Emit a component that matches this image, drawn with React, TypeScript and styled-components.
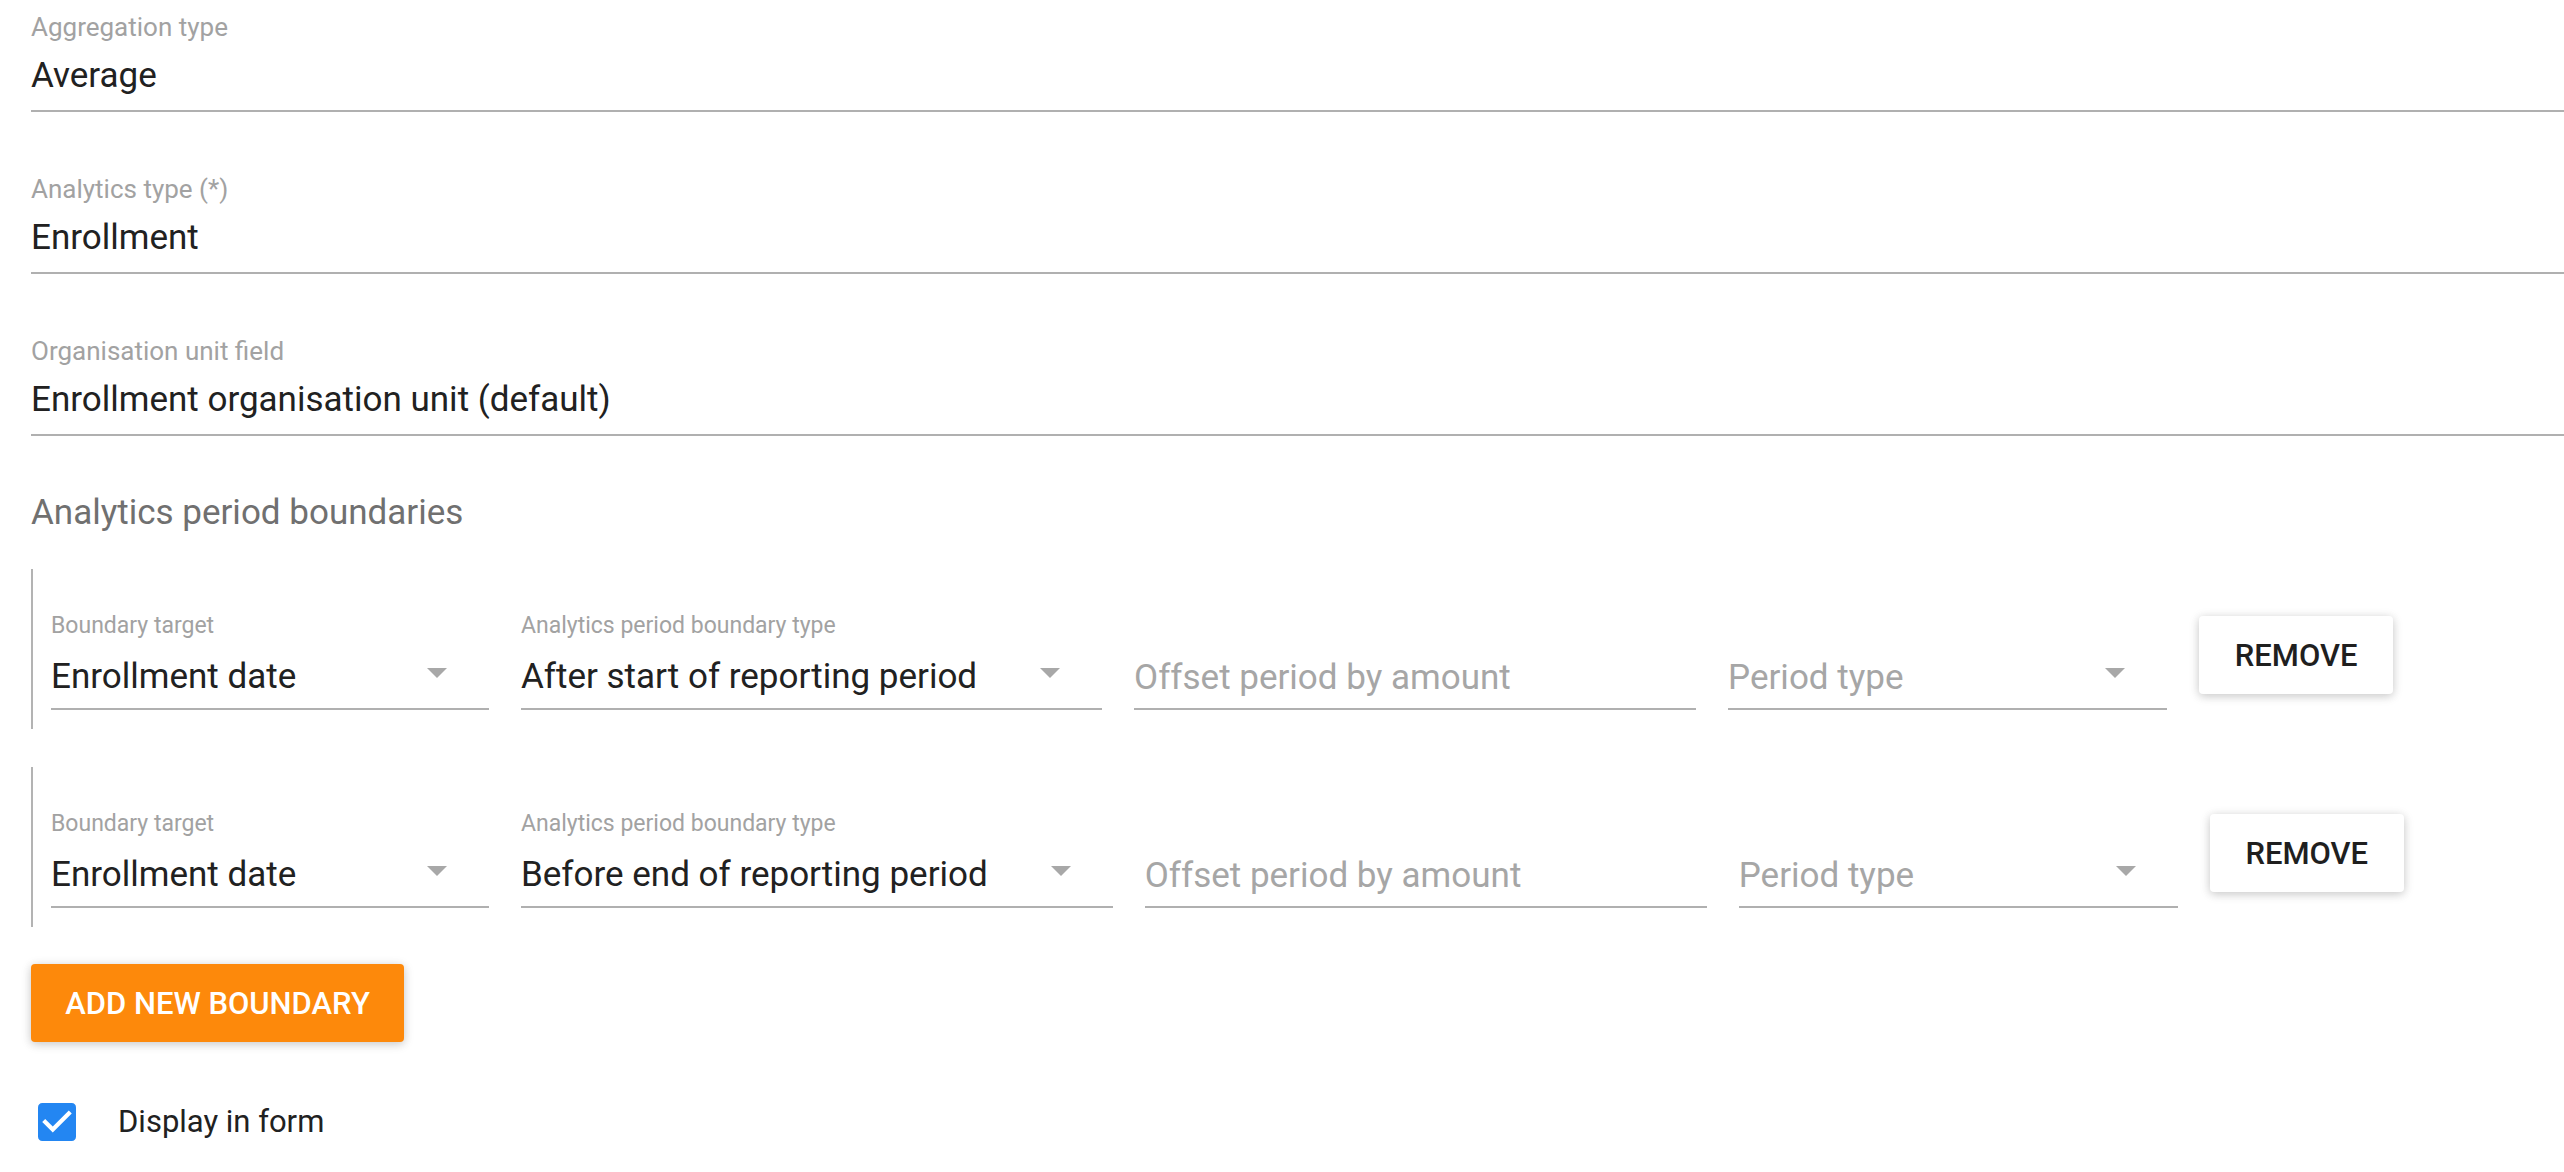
import React from "react";
import styled, { createGlobalStyle } from "styled-components";

const GlobalStyle = createGlobalStyle`
  html, body { margin: 0; padding: 0; background: #ffffff; }
  body {
    font-family: Roboto, "Noto Sans", "Liberation Sans", sans-serif;
    -webkit-font-smoothing: antialiased;
  }
  * { box-sizing: border-box; }
`;

const Page = styled.main`
  display: flex;
  flex-direction: column;
  align-items: flex-start;
  padding: 15px 0 30px 31px;
`;

const InfoField = styled.div`
  align-self: stretch;
  display: flex;
  flex-direction: column;
  padding-bottom: 18px;
  border-bottom: 2px solid #b0b0b0;
  & + & {
    margin-top: 65px;
  }
`;

const FloatingLabel = styled.div<{ $small?: boolean }>`
  height: 24px;
  font-size: ${(p) => (p.$small ? 23 : 26)}px;
  line-height: 24px;
  color: #a2a2a2;
  white-space: nowrap;
`;

const InfoValue = styled.div`
  margin-top: 21px;
  font-size: 35px;
  line-height: 32px;
  color: #212121;
  white-space: nowrap;
`;

const SectionTitle = styled.h2`
  margin: 59px 0 0;
  font-size: 35px;
  line-height: 36px;
  font-weight: 400;
  color: #707070;
`;

const BoundaryList = styled.div`
  align-self: stretch;
  display: flex;
  flex-direction: column;
  gap: 38px;
  margin-top: 38px;
`;

const BoundaryRow = styled.div`
  display: flex;
  align-items: flex-start;
  gap: 32px;
  border-left: 2px solid #b3b3b3;
  padding: 45px 0 19px 18px;
`;

const Field = styled.div<{ $width?: number; $minWidth?: number }>`
  display: flex;
  flex-direction: column;
  flex: none;
  ${(p) => (p.$width ? `width: ${p.$width}px;` : "")}
  ${(p) => (p.$minWidth ? `min-width: ${p.$minWidth}px;` : "")}
`;

const FieldControl = styled.div`
  display: flex;
  align-items: flex-start;
  height: 57px;
  margin-top: 15px;
  border-bottom: 2px solid #b0b0b0;
`;

const SpacerLabel = styled.div`
  height: 24px;
`;

const SelectText = styled.span<{ $placeholder?: boolean }>`
  flex: 1 1 auto;
  font-size: 35px;
  line-height: 30px;
  white-space: nowrap;
  padding-top: ${(p) => (p.$placeholder ? 10 : 9)}px;
  color: ${(p) => (p.$placeholder ? "#a6a6a6" : "#212121")};
`;

const ArrowIcon = styled.svg`
  flex: none;
  width: 20px;
  height: 10px;
  margin: 15px 42px 0 63px;
  fill: #a8a8a8;
`;

const TextInput = styled.input`
  width: 100%;
  height: 50px;
  border: none;
  outline: none;
  padding: 0;
  margin: 0;
  background: transparent;
  font-family: inherit;
  font-size: 35px;
  line-height: 50px;
  color: #212121;
  &::placeholder {
    color: #a6a6a6;
    opacity: 1;
  }
`;

const RaisedButton = styled.button<{ $primary?: boolean; $width: number }>`
  flex: none;
  width: ${(p) => p.$width}px;
  height: 78px;
  padding: 0;
  border: none;
  border-radius: 4px;
  background: ${(p) => (p.$primary ? "#fd890b" : "#ffffff")};
  color: ${(p) => (p.$primary ? "#ffffff" : "#1f1f1f")};
  font-family: inherit;
  font-size: 31px;
  font-weight: 500;
  text-transform: uppercase;
  letter-spacing: 0;
  box-shadow: 0 2px 12px rgba(0, 0, 0, 0.12), 0 2px 8px rgba(0, 0, 0, 0.12);
  cursor: pointer;
`;

const RemoveButton = styled(RaisedButton)`
  margin-top: 2px;
`;

const AddButton = styled(RaisedButton)`
  margin-top: 37px;
`;

const CheckRow = styled.label`
  display: flex;
  align-items: center;
  gap: 42px;
  margin: 61px 0 0 7px;
  font-size: 31px;
  line-height: 32px;
  color: #212121;
  cursor: pointer;
`;

const CheckIcon = styled.svg`
  width: 38px;
  height: 38px;
  flex: none;
`;

function Arrow() {
  return (
    <ArrowIcon viewBox="0 0 20 10">
      <polygon points="0,0 20,0 10,10" />
    </ArrowIcon>
  );
}

function SelectField({
  label,
  value,
  placeholder,
  minWidth,
}: {
  label?: string;
  value?: string;
  placeholder?: string;
  minWidth: number;
}) {
  return (
    <Field $minWidth={minWidth}>
      {label ? <FloatingLabel $small>{label}</FloatingLabel> : <SpacerLabel />}
      <FieldControl>
        <SelectText $placeholder={!value}>{value ?? placeholder}</SelectText>
        <Arrow />
      </FieldControl>
    </Field>
  );
}

function Boundary({ type }: { type: string }) {
  return (
    <BoundaryRow>
      <SelectField label="Boundary target" value="Enrollment date" minWidth={438} />
      <SelectField label="Analytics period boundary type" value={type} minWidth={438} />
      <Field $width={562}>
        <SpacerLabel />
        <FieldControl>
          <TextInput placeholder="Offset period by amount" />
        </FieldControl>
      </Field>
      <SelectField placeholder="Period type" minWidth={439} />
      <RemoveButton $width={194}>Remove</RemoveButton>
    </BoundaryRow>
  );
}

export default function App() {
  return (
    <>
      <GlobalStyle />
      <Page>
        <InfoField>
          <FloatingLabel>Aggregation type</FloatingLabel>
          <InfoValue>Average</InfoValue>
        </InfoField>
        <InfoField>
          <FloatingLabel>Analytics type (*)</FloatingLabel>
          <InfoValue>Enrollment</InfoValue>
        </InfoField>
        <InfoField>
          <FloatingLabel>Organisation unit field</FloatingLabel>
          <InfoValue>Enrollment organisation unit (default)</InfoValue>
        </InfoField>

        <SectionTitle>Analytics period boundaries</SectionTitle>

        <BoundaryList>
          <Boundary type="After start of reporting period" />
          <Boundary type="Before end of reporting period" />
        </BoundaryList>

        <AddButton $primary $width={373}>Add new boundary</AddButton>

        <CheckRow>
          <CheckIcon viewBox="3 3 18 18">
            <path
              fill="#2386f2"
              d="M19 3H5c-1.11 0-2 .9-2 2v14c0 1.1.89 2 2 2h14c1.11 0 2-.9 2-2V5c0-1.1-.89-2-2-2z"
            />
            <path fill="#ffffff" d="M10 17l-5-5 1.41-1.41L10 14.17l7.59-7.59L19 8l-9 9z" />
          </CheckIcon>
          Display in form
        </CheckRow>
      </Page>
    </>
  );
}
